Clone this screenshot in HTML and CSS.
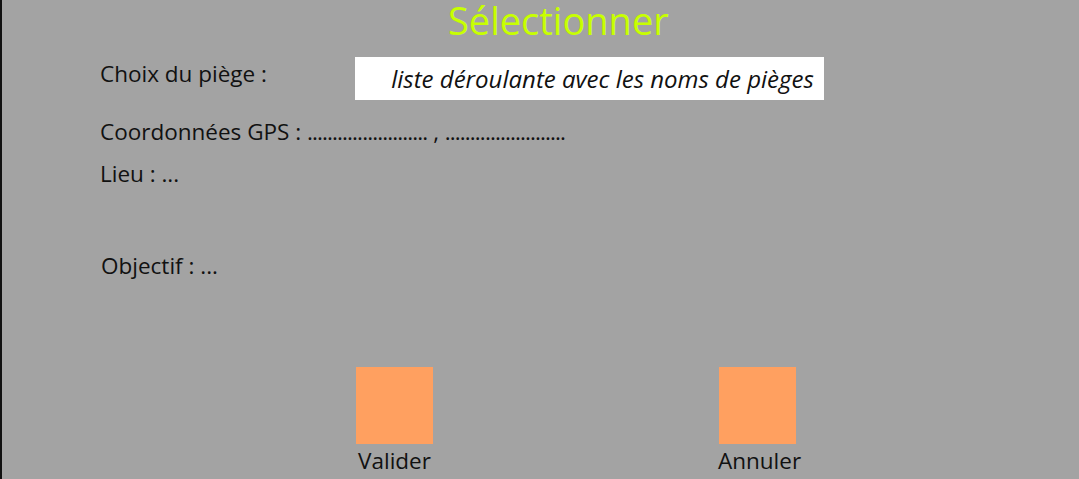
FILE: index.html
```html
<!DOCTYPE html>
<html lang="fr">
<head>
<meta charset="utf-8">
<title>Sélectionner</title>
<link rel="stylesheet" href="styles.css">
</head>
<body>
<div class="screen">
  <h1 class="title">Sélectionner</h1>
  <div class="row row-choice">
    <span class="label">Choix du piège :</span>
    <div class="select">liste déroulante avec les noms de pièges</div>
  </div>
  <div class="row row-gps">Coordonnées GPS : <span class="dots">........................</span> , <span class="dots">........................</span></div>
  <div class="row row-lieu">Lieu : ...</div>
  <div class="row row-obj">Objectif : ...</div>
  <div class="actions">
    <div class="action action-ok">
      <div class="square"></div>
      <span class="action-label">Valider</span>
    </div>
    <div class="action action-cancel">
      <div class="square"></div>
      <span class="action-label">Annuler</span>
    </div>
  </div>
</div>
</body>
</html>
```
FILE: styles.css
```css
html, body {
  margin: 0;
  padding: 0;
}
body {
  background: #a3a3a3;
  font-family: "Open Sans", "Noto Sans", sans-serif;
  color: #111;
}
.screen {
  box-sizing: border-box;
  height: 479px;
  border-left: 2px solid #111;
  overflow: hidden;
}
.title {
  margin: 0;
  padding-left: 446px;
  font-size: 38px;
  font-weight: 400;
  line-height: 40px;
  color: #c8ff00;
}
.row {
  font-size: 22.5px;
  line-height: 30px;
  padding-left: 98px;
  white-space: nowrap;
}
.row-choice {
  display: flex;
  align-items: flex-start;
  margin-top: 17px;
}
.row-choice .label {
  width: 255px;
  padding-top: 2px;
}
.select {
  width: 469px;
  height: 43px;
  background: #fff;
  font-style: italic;
  font-size: 24px;
  display: flex;
  align-items: center;
  justify-content: center;
  padding-left: 26px;
  box-sizing: border-box;
}
.row-gps {
  margin-top: 17px;
}
.dots {
  letter-spacing: -0.9px;
}
.row-lieu {
  margin-top: 12px;
}
.row-obj {
  margin-top: 62px;
  padding-left: 99px;
}
.actions {
  display: flex;
  margin-top: 86px;
  padding-left: 354px;
  gap: 286px;
}
.action {
  display: flex;
  flex-direction: column;
  align-items: center;
  width: 77px;
}
.square {
  width: 77px;
  height: 77px;
  background: #ffa060;
}
.action-label {
  font-size: 22.5px;
  line-height: 30px;
  margin-top: 2px;
  white-space: nowrap;
}
.action-cancel .action-label {
  margin-left: 4px;
}
```
